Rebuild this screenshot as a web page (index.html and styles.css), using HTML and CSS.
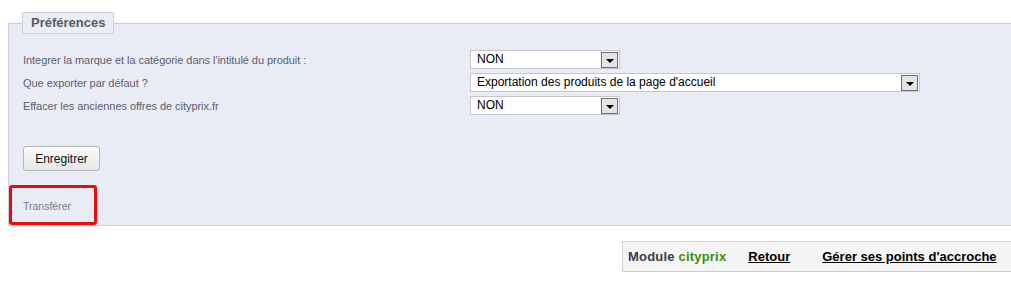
FILE: index.html
```html
<!DOCTYPE html>
<html>
<head>
    <title>cityprix - Préférences</title>
    <link rel="stylesheet" href="styles.css">
</head>
<body>
    <fieldset class="prefs">
        <legend>Préférences</legend>

        <div class="rows">
            <label>Integrer la marque et la catégorie dans l'intitulé du produit :</label>
            <div class="select small"><span>NON</span><i class="arrow"></i></div>

            <label>Que exporter par défaut ?</label>
            <div class="select wide"><span>Exportation des produits de la page d'accueil</span><i class="arrow"></i></div>

            <label>Effacer les anciennes offres de cityprix.fr</label>
            <div class="select small"><span>NON</span><i class="arrow"></i></div>
        </div>

        <button class="save" type="button">Enregitrer</button>

        <div class="transfer">Transférer</div>
    </fieldset>

    <div class="toolbar">
        <span class="module">Module <em>cityprix</em></span>
        <a href="#" class="back">Retour</a>
        <a href="#" class="hooks">Gérer ses points d'accroche</a>
    </div>
</body>
</html>
```

FILE: styles.css
```css
body {
    margin: 0;
    font-family: "Liberation Sans", Arial, sans-serif;
    background: #fff;
    overflow: hidden;
}

.prefs {
    margin: 12px 0 0 8px;
    padding: 16px 0 0 14px;
    border: 1px solid #ccced8;
    border-right: none;
    background: #e9ecf4;
    min-width: 0;
}

.prefs legend {
    margin-left: -1px;
    padding: 0 8px;
    height: 20px;
    line-height: 20px;
    font-size: 13px;
    font-weight: bold;
    color: #565a6b;
    background: #eceef5;
    border: 1px solid #ccced8;
}

.rows {
    display: grid;
    grid-template-columns: 447px auto;
    row-gap: 4px;
    align-items: center;
}

.rows label {
    font-size: 11px;
    letter-spacing: -0.05px;
    color: #5c5f70;
}

.select {
    display: flex;
    align-items: center;
    height: 17px;
    background: #fff;
    border: 1px solid #c3c6cf;
    font-size: 12px;
    color: #000;
    box-sizing: content-box;
}

.select.small { width: 148px; }
.select.wide { width: 448px; }

.select span {
    flex: 1;
    padding-left: 6px;
    line-height: 17px;
}

.select .arrow {
    position: relative;
    width: 15px;
    height: 14px;
    margin-right: 1px;
    background: #e4e4e4;
    border: 1px solid #6e6e6e;
}

.select .arrow::after {
    content: '';
    position: absolute;
    left: 4px;
    top: 6px;
    border-left: 4px solid transparent;
    border-right: 4px solid transparent;
    border-top: 4px solid #000;
}

.save {
    display: block;
    margin-top: 31px;
    width: 77px;
    height: 25px;
    padding: 0;
    font-family: "Liberation Sans", Arial, sans-serif;
    font-size: 12px;
    color: #111;
    background: linear-gradient(#fbfbfb, #e6e6e6);
    border: 1px solid #b4b4b4;
    border-radius: 3px;
}

.transfer {
    margin: 14px 0 0 -14px;
    width: 71px;
    height: 34px;
    padding-left: 11px;
    line-height: 36px;
    font-size: 10.5px;
    color: #7b7b8c;
    border: 3px solid #ee0a0a;
    border-radius: 3px;
}

.toolbar {
    display: flex;
    align-items: center;
    margin: 15px 0 0 622px;
    height: 29px;
    padding-left: 5px;
    border: 1px solid #cfcfcf;
    border-right: none;
    background: #f5f5f5;
    font-size: 13px;
    font-weight: bold;
}

.module {
    color: #383d4e;
    letter-spacing: 0.2px;
}

.module em {
    font-style: normal;
    color: #3c8e12;
}

.toolbar a {
    color: #000;
    text-decoration: underline;
}

.back { margin-left: 22px; }
.hooks { margin-left: 32px; }
```
